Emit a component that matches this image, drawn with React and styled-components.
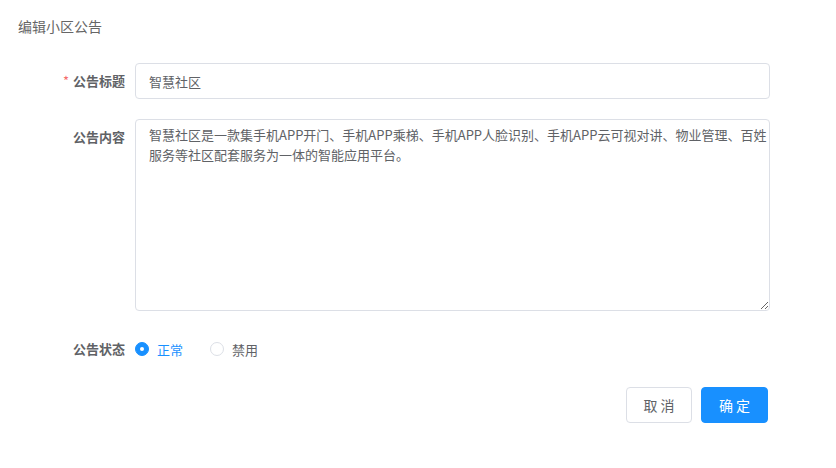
import React, { useState } from "react";
import styled, { createGlobalStyle } from "styled-components";

const Global = createGlobalStyle`
  html, body { margin: 0; padding: 0; background: #fff; }
  body { font-family: "Noto Sans CJK SC", "Liberation Sans", sans-serif; }
  * { box-sizing: border-box; }
`;

const Page = styled.div`
  width: 836px;
  height: 468px;
  padding: 16px 18px;
  background: #fff;
`;

const Title = styled.div`
  font-size: 14px;
  line-height: 20px;
  color: #666;
`;

const Form = styled.form`
  width: 752px;
  margin-top: 27px;
  display: flex;
  flex-direction: column;
  gap: 20px;
`;

const Row = styled.div`
  display: flex;
  align-items: flex-start;
`;

const Label = styled.label`
  width: 117px;
  flex: none;
  padding-right: 10px;
  text-align: right;
  font-size: 13px;
  font-weight: 700;
  line-height: 36px;
  color: #606266;
`;

const Star = styled.span`
  color: #f56c6c;
  margin-right: 4px;
  font-weight: 400;
`;

const Field = styled.div`
  flex: 1;
  display: flex;
  align-items: center;
  min-height: 36px;
`;

const Input = styled.input`
  width: 100%;
  height: 36px;
  border: 1px solid #dcdfe6;
  border-radius: 4px;
  padding: 0 13px;
  font-family: inherit;
  font-size: 13px;
  color: #606266;
  outline: none;
  background: #fff;
`;

const TextArea = styled.textarea`
  width: 100%;
  height: 192px;
  border: 1px solid #dcdfe6;
  border-radius: 4px;
  padding: 5px 4px 5px 13px;
  font-family: inherit;
  font-size: 13px;
  line-height: 1.5;
  color: #606266;
  outline: none;
  resize: vertical;
  overflow: hidden;
  white-space: pre;
  display: block;
  background: #fff;
`;

const RadioItem = styled.label`
  display: inline-flex;
  align-items: center;
  margin-right: 27px;
  cursor: pointer;
  font-size: 13px;
  color: ${(p) => (p.$checked ? "#1890ff" : "#606266")};
`;

const RadioDot = styled.span`
  width: 14px;
  height: 14px;
  border-radius: 50%;
  border: 1px solid ${(p) => (p.$checked ? "#1890ff" : "#dcdfe6")};
  background: ${(p) => (p.$checked ? "#1890ff" : "#fff")};
  display: inline-flex;
  align-items: center;
  justify-content: center;
  margin-right: 8px;
  &::after {
    content: "";
    width: 4px;
    height: 4px;
    border-radius: 50%;
    background: #fff;
    display: ${(p) => (p.$checked ? "block" : "none")};
  }
`;

const Footer = styled.div`
  display: flex;
  justify-content: flex-end;
  gap: 9px;
  padding-right: 2px;
`;

const Button = styled.button`
  height: 36px;
  width: ${(p) => (p.$primary ? "67px" : "66px")};
  padding: 0 0 0 3px;
  border-radius: 4px;
  border: 1px solid ${(p) => (p.$primary ? "#1890ff" : "#dcdfe6")};
  background: ${(p) => (p.$primary ? "#1890ff" : "#fff")};
  color: ${(p) => (p.$primary ? "#fff" : "#606266")};
  font-family: inherit;
  font-size: 14px;
  letter-spacing: 3px;
  cursor: pointer;
`;

const content =
  "智慧社区是一款集手机APP开门、手机APP乘梯、手机APP人脸识别、手机APP云可视对讲、物业管理、百姓\n服务等社区配套服务为一体的智能应用平台。";

export default function App() {
  const [status, setStatus] = useState("normal");
  return (
    <>
      <Global />
      <Page>
        <Title>编辑小区公告</Title>
        <Form onSubmit={(e) => e.preventDefault()}>
          <Row>
            <Label>
              <Star>*</Star>公告标题
            </Label>
            <Field>
              <Input defaultValue="智慧社区" />
            </Field>
          </Row>
          <Row>
            <Label>公告内容</Label>
            <Field>
              <TextArea defaultValue={content} wrap="off" />
            </Field>
          </Row>
          <Row>
            <Label>公告状态</Label>
            <Field>
              <RadioItem $checked={status === "normal"} onClick={() => setStatus("normal")}>
                <RadioDot $checked={status === "normal"} />
                正常
              </RadioItem>
              <RadioItem $checked={status === "disabled"} onClick={() => setStatus("disabled")}>
                <RadioDot $checked={status === "disabled"} />
                禁用
              </RadioItem>
            </Field>
          </Row>
          <Footer>
            <Button type="button">取消</Button>
            <Button type="button" $primary>
              确定
            </Button>
          </Footer>
        </Form>
      </Page>
    </>
  );
}
